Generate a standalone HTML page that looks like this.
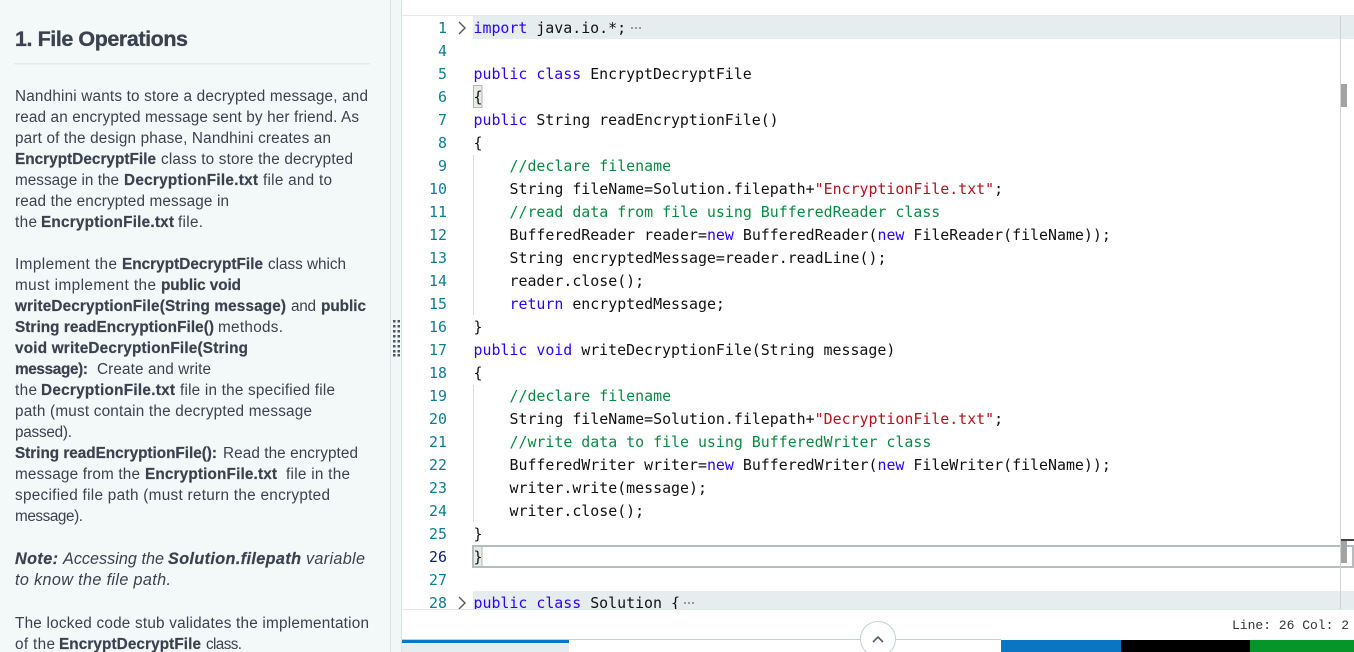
<!DOCTYPE html>
<html><head><meta charset="utf-8"><style>
html,body{margin:0;padding:0;width:1354px;height:652px;overflow:hidden;background:#fff}
svg{display:block}
.t text{font-family:"Liberation Sans",sans-serif;font-size:15.3px;fill:#39424e}
.t .b{font-weight:700;stroke:#39424e;stroke-width:.2px}.t .i{font-style:italic;font-size:16.2px}
.c text{font-family:"DejaVu Sans Mono",monospace;font-size:14.92px;fill:#111;white-space:pre}
.c .k{fill:#2b00ff}.c .m{fill:#098a43}.c .s{fill:#b5121b}
.n text{font-family:"DejaVu Sans Mono",monospace;font-size:14.92px;fill:#0f7c93;text-anchor:end}
</style></head><body>
<svg width="1354" height="652" viewBox="0 0 1354 652" xmlns="http://www.w3.org/2000/svg">
<rect x="0" y="0" width="390" height="652" fill="#f3f8f9"/>
<rect x="390" y="0" width="1" height="652" fill="#d9e3e6"/>
<rect x="391" y="0" width="10" height="652" fill="#f1f6f7"/>
<rect x="401" y="0" width="1" height="652" fill="#d9e3e6"/>
<rect x="14" y="63" width="356" height="1.5" fill="#e6eaeb"/>
<g fill="#4b5565">
<rect x="393" y="320" width="2.5" height="2.5"/><rect x="397.5" y="320" width="2.5" height="2.5"/>
<rect x="393" y="325" width="2.5" height="2.5"/><rect x="397.5" y="325" width="2.5" height="2.5"/>
<rect x="393" y="330" width="2.5" height="2.5"/><rect x="397.5" y="330" width="2.5" height="2.5"/>
<rect x="393" y="335" width="2.5" height="2.5"/><rect x="397.5" y="335" width="2.5" height="2.5"/>
<rect x="393" y="340" width="2.5" height="2.5"/><rect x="397.5" y="340" width="2.5" height="2.5"/>
<rect x="393" y="345" width="2.5" height="2.5"/><rect x="397.5" y="345" width="2.5" height="2.5"/>
<rect x="393" y="350" width="2.5" height="2.5"/><rect x="397.5" y="350" width="2.5" height="2.5"/>
<rect x="393" y="354" width="2.5" height="2.5"/><rect x="397.5" y="354" width="2.5" height="2.5"/>
</g>

<g class="t">
<text x="15" y="46" textLength="173" class="b" style="font-size:21.5px;stroke-width:.3px">1. File Operations</text>
<text x="15" y="101" textLength="353">Nandhini wants to store a decrypted message, and</text>
<text x="15" y="122" textLength="344">read an encrypted message sent by her friend. As</text>
<text x="15" y="143" textLength="316">part of the design phase, Nandhini creates an</text>
<text x="15" y="164" textLength="141" class="b">EncryptDecryptFile</text><text x="161" y="164" textLength="192">class to store the decrypted</text>
<text x="15" y="185" textLength="104">message in the</text><text x="124" y="185" textLength="134" class="b">DecryptionFile.txt</text><text x="263" y="185" textLength="69">file and to</text>
<text x="15" y="206" textLength="214">read the encrypted message in</text>
<text x="15" y="227" textLength="22">the</text><text x="41" y="227" textLength="133" class="b">EncryptionFile.txt</text><text x="178" y="227" textLength="25">file.</text>

<text x="15" y="269" textLength="102">Implement the</text><text x="122" y="269" textLength="141" class="b">EncryptDecryptFile</text><text x="268" y="269" textLength="78">class which</text>
<text x="15" y="290" textLength="141">must implement the</text><text x="161" y="290" textLength="80" class="b">public void</text>
<text x="15" y="311" textLength="271" class="b">writeDecryptionFile(String message)</text><text x="291" y="311" textLength="25">and</text><text x="321" y="311" textLength="45" class="b">public</text>
<text x="15" y="332" textLength="199" class="b">String readEncryptionFile()</text><text x="218" y="332" textLength="65">methods.</text>
<text x="15" y="353" textLength="233" class="b">void writeDecryptionFile(String</text>
<text x="15" y="374" textLength="73" class="b">message):</text><text x="97" y="374" textLength="114">Create and write</text>
<text x="15" y="395" textLength="22">the</text><text x="41" y="395" textLength="134" class="b">DecryptionFile.txt</text><text x="180" y="395" textLength="155">file in the specified file</text>
<text x="15" y="416" textLength="297">path (must contain the decrypted message</text>
<text x="15" y="437" textLength="57">passed).</text>
<text x="15" y="458" textLength="202" class="b">String readEncryptionFile():</text><text x="223" y="458" textLength="135">Read the encrypted</text>
<text x="15" y="479" textLength="125">message from the</text><text x="145" y="479" textLength="132" class="b">EncryptionFile.txt</text><text x="286" y="479" textLength="64">file in the</text>
<text x="15" y="500" textLength="315">specified file path (must return the encrypted</text>
<text x="15" y="521" textLength="68">message).</text>

<text x="15" y="564" textLength="43" class="b i">Note:</text><text x="63" y="564" textLength="101" class="i">Accessing the</text><text x="168" y="564" textLength="133" class="b i">Solution.filepath</text><text x="306" y="564" textLength="59" class="i">variable</text>
<text x="15" y="585" textLength="156" class="i">to know the file path.</text>

<text x="15" y="628" textLength="354">The locked code stub validates the implementation</text>
<text x="15" y="649" textLength="40">of the</text><text x="59" y="649" textLength="142" class="b">EncryptDecryptFile</text><text x="206" y="649" textLength="36">class.</text>
</g>

<rect x="402" y="15" width="952" height="1" fill="#e6eaec"/>
<rect x="473" y="16" width="881" height="23" fill="#e6edef"/>
<rect x="473" y="591" width="881" height="19" fill="#e6edef"/>
<rect x="473.5" y="85.5" width="8.5" height="22" fill="#e4ece4" stroke="#b5b8b5"/>
<rect x="473.5" y="546.5" width="8.5" height="21" fill="#e4ece4" stroke="#b5b8b5"/>
<rect x="473" y="155" width="1" height="160" fill="#dcdcdc"/>
<rect x="473" y="385" width="1" height="137" fill="#dcdcdc"/>
<rect x="473" y="546" width="880" height="21" fill="none" stroke="#b6bdc1" stroke-width="2"/>

<g class="n">
<text x="447" y="33">1</text><text x="447" y="56">4</text><text x="447" y="79">5</text><text x="447" y="102">6</text><text x="447" y="125">7</text><text x="447" y="148">8</text><text x="447" y="171">9</text><text x="447" y="194">10</text><text x="447" y="217">11</text><text x="447" y="240">12</text><text x="447" y="263">13</text><text x="447" y="286">14</text><text x="447" y="309">15</text><text x="447" y="332">16</text><text x="447" y="355">17</text><text x="447" y="378">18</text><text x="447" y="401">19</text><text x="447" y="424">20</text><text x="447" y="447">21</text><text x="447" y="470">22</text><text x="447" y="493">23</text><text x="447" y="516">24</text><text x="447" y="539">25</text><text x="447" y="562" style="fill:#0b216f">26</text><text x="447" y="585">27</text><text x="447" y="608">28</text>
</g>
<path d="M459 22l6 6-6 6M459 597l6 6-6 6" fill="none" stroke="#555" stroke-width="1.4"/>

<svg x="402" y="16" width="938" height="593" viewBox="402 16 938 593">
<g class="c">
<text x="473.5" y="33"><tspan class="k">import</tspan> java.io.*;</text>
<text x="473.5" y="79"><tspan class="k">public</tspan> <tspan class="k">class</tspan> EncryptDecryptFile</text>
<text x="473.5" y="102">{</text>
<text x="473.5" y="125"><tspan class="k">public</tspan> String readEncryptionFile()</text>
<text x="473.5" y="148">{</text>
<text x="509.5" y="171" class="m">//declare filename</text>
<text x="509.5" y="194">String fileName=Solution.filepath+<tspan class="s">"EncryptionFile.txt"</tspan>;</text>
<text x="509.5" y="217" class="m">//read data from file using BufferedReader class</text>
<text x="509.5" y="240">BufferedReader reader=<tspan class="k">new</tspan> BufferedReader(<tspan class="k">new</tspan> FileReader(fileName));</text>
<text x="509.5" y="263">String encryptedMessage=reader.readLine();</text>
<text x="509.5" y="286">reader.close();</text>
<text x="509.5" y="309"><tspan class="k">return</tspan> encryptedMessage;</text>
<text x="473.5" y="332">}</text>
<text x="473.5" y="355"><tspan class="k">public</tspan> <tspan class="k">void</tspan> writeDecryptionFile(String message)</text>
<text x="473.5" y="378">{</text>
<text x="509.5" y="401" class="m">//declare filename</text>
<text x="509.5" y="424">String fileName=Solution.filepath+<tspan class="s">"DecryptionFile.txt"</tspan>;</text>
<text x="509.5" y="447" class="m">//write data to file using BufferedWriter class</text>
<text x="509.5" y="470">BufferedWriter writer=<tspan class="k">new</tspan> BufferedWriter(<tspan class="k">new</tspan> FileWriter(fileName));</text>
<text x="509.5" y="493">writer.write(message);</text>
<text x="509.5" y="516">writer.close();</text>
<text x="473.5" y="539">}</text>
<text x="473.5" y="562">}</text>
<text x="473.5" y="608"><tspan class="k">public</tspan> <tspan class="k">class</tspan> Solution {</text>
</g>
<g fill="#999">
<rect x="631" y="27" width="2" height="2"/><rect x="635" y="27" width="2" height="2"/><rect x="639" y="27" width="2" height="2"/>
<rect x="684" y="602" width="2" height="2"/><rect x="688" y="602" width="2" height="2"/><rect x="692" y="602" width="2" height="2"/>
</g>
</svg>

<rect x="402" y="609" width="938" height="1" fill="#e6e6e6"/>
<rect x="1340" y="16" width="1" height="593" fill="#d2d2d2"/>
<rect x="1341" y="84" width="6" height="23" fill="#a3a3a3"/>
<rect x="1341" y="541" width="6" height="22" fill="#a3a3a3"/>
<rect x="1341" y="539" width="13" height="2" fill="#444"/>

<text x="1232" y="629" style="font-family:'Liberation Mono',monospace;font-size:13px;fill:#333" textLength="117">Line: 26 Col: 2</text>

<rect x="402" y="639" width="599" height="1" fill="#c6d0d4"/>
<rect x="402" y="640" width="167" height="3" fill="#0a75c2"/>
<rect x="402" y="643" width="167" height="9" fill="#e6edef"/>
<rect x="1001" y="640" width="120" height="12" fill="#0a75c2"/>
<rect x="1121" y="640" width="129" height="12" fill="#000"/>
<rect x="1250" y="640" width="104" height="12" fill="#079428"/>
<circle cx="878" cy="639" r="17.5" fill="#fff" stroke="#c6d0d4"/>
<path d="M873 642l5-5 5 5" fill="none" stroke="#555e66" stroke-width="1.6"/>
</svg>
</body></html>
